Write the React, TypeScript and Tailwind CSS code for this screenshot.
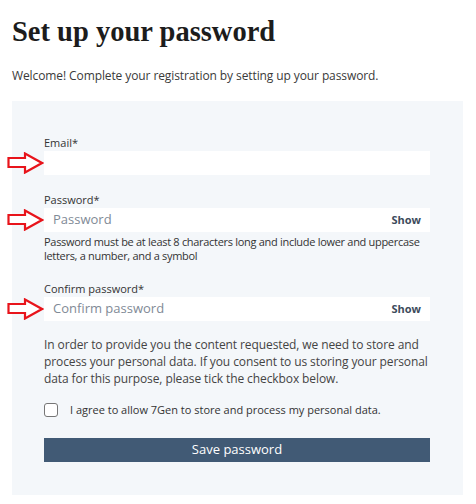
import React from "react";

const Arrow = () => (
  <svg width="37" height="22" viewBox="0 0 37 22" className="absolute -left-[37px] top-1/2 -translate-y-1/2">
    <path
      d="M1.5 6 H18 V1.5 L35 11 L18 20.5 V15 H1.5 Z"
      fill="white"
      stroke="#e8141b"
      strokeWidth="2.2"
      strokeLinejoin="miter"
    />
  </svg>
);

const Field = ({
  label,
  placeholder,
  show,
}: {
  label: string;
  placeholder?: string;
  show?: boolean;
}) => (
  <div>
    <label className="block text-[11px] leading-[14px] text-[#333] mb-[1px]">{label}</label>
    <div className="relative flex items-center h-6 bg-white">
      <Arrow />
      <span className="flex-1 pl-[9px] text-[13px] text-[#7f8a96]">{placeholder}</span>
      {show && <span className="pr-[9px] text-[11px] font-bold text-[#3d4b5c]">Show</span>}
    </div>
  </div>
);

export default function App() {
  return (
    <div className="bg-white w-[476px] h-[504px] pl-3 pt-[14px] font-['Open_Sans',sans-serif] text-[#333]">
      <h1 className="font-['Liberation_Serif',serif] font-bold text-[28.5px] leading-[36px] text-[#1c1c1c]">
        Set up your password
      </h1>
      <p className="mt-[18px] text-[12px] leading-[16px] text-[#3a3a3a] tracking-[-0.1px]">
        Welcome! Complete your registration by setting up your password.
      </p>
      <div className="mt-[17px] w-[451px] h-[394px] bg-[#f4f7fa] pl-8 pr-[33px] pt-[35px]">
        <Field label="Email*" />
        <div className="mt-[18px]">
          <Field label="Password*" placeholder="Password" show />
          <p className="mt-[3px] text-[11px] leading-[14px] text-[#333] tracking-[-0.3px]">
            Password must be at least 8 characters long and include lower and uppercase letters, a number, and a symbol
          </p>
        </div>
        <div className="mt-[19px]">
          <Field label="Confirm password*" placeholder="Confirm password" show />
        </div>
        <p className="mt-[15px] text-[12px] leading-[17px] text-[#444] tracking-[-0.1px]">
          In order to provide you the content requested, we need to store and process your personal data. If you consent to us storing your personal data for this purpose, please tick the checkbox below.
        </p>
        <label className="mt-[16px] flex items-center gap-3 h-[14px]">
          <span className="w-[14px] h-[14px] rounded-[3px] border border-[#767676] bg-white" />
          <span className="text-[11px] leading-[14px] text-[#333]">I agree to allow 7Gen to store and process my personal data.</span>
        </label>
        <button className="mt-[21px] block w-full h-6 bg-[#415a75] text-white text-[13px]">Save password</button>
      </div>
    </div>
  );
}
